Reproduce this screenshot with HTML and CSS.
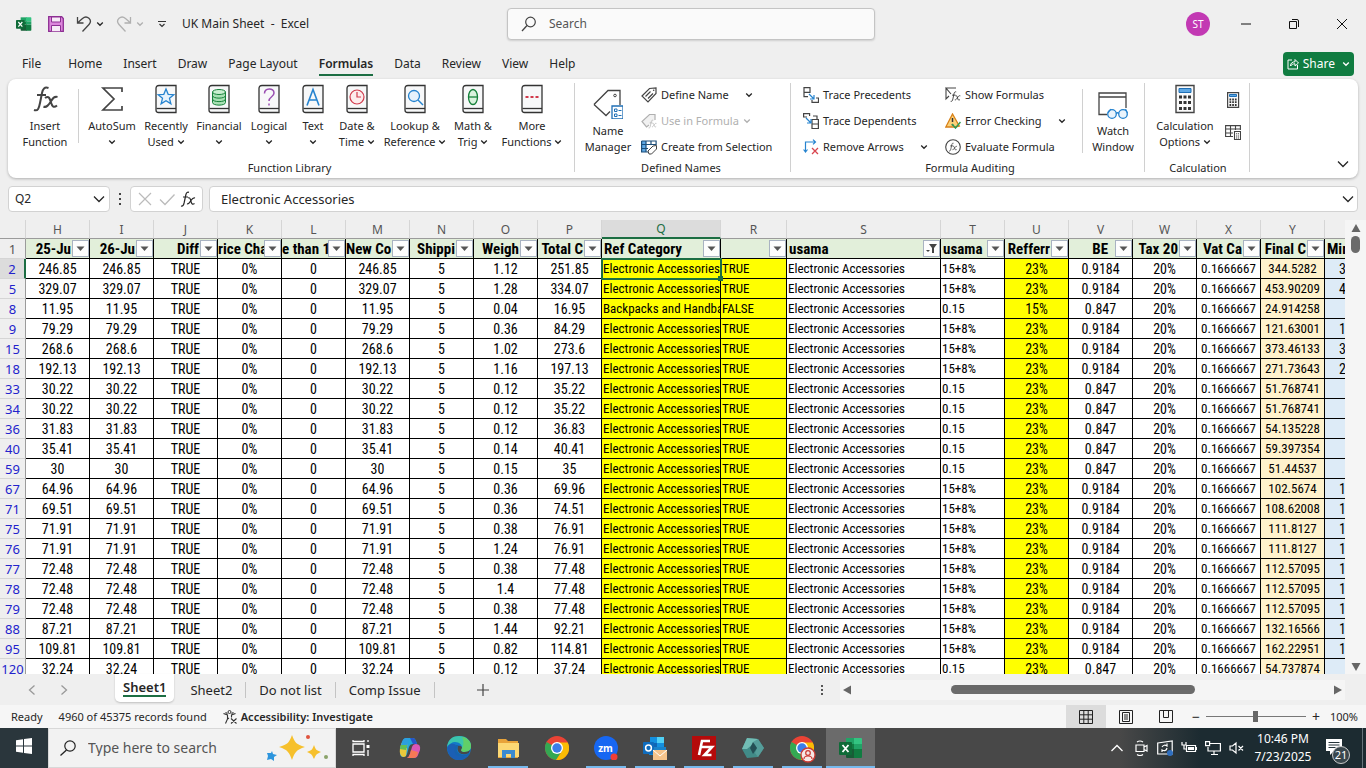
FILE: index.html
```html
<!DOCTYPE html>
<html lang="en">
<head>
<meta charset="utf-8">
<title>UK Main Sheet - Excel</title>
<link rel="stylesheet" href="styles.css">
</head>
<body>
<svg class="defs" aria-hidden="true">
  <symbol id="chev" viewBox="0 0 8 8"><path d="M1.2 2.5 4 5.3 6.800 2.500" fill="none" stroke="currentColor" stroke-width="1.3"/></symbol>
  <symbol id="chevbig" viewBox="0 0 12 12"><path d="M1 3.500 6 8.500 11 3.500" fill="none" stroke="currentColor" stroke-width="1.300"/></symbol>
  <symbol id="book" viewBox="0 0 22 30"><path d="M21 1.500H4Q1 1.500 1 4.500V26Q1 28.500 3.500 28.500H21Z" fill="#f7f8f9" stroke="#333" stroke-width="1.300"/><path d="M1.500 24.500H21" stroke="#333" stroke-width="1.300"/></symbol>
  <symbol id="fx" viewBox="0 0 16 16"><path d="M1 15c2 .5 2.600-1 3.200-3.500L5.800 4C6.300 1.800 7.200.8 9 1.300M3 6h5M8 7c2-1 2.300 1 3 3.500S12.500 14 14.500 12.500M15 7c-2-.8-3 1-4 2.500S8.500 13.500 7 12.800" fill="none" stroke="currentColor" stroke-width="1.200"/></symbol>
  <symbol id="excel" viewBox="0 0 24 24"><path d="M7 2h9v6H7z" fill="#21a366"/><path d="M15 2h7q1 0 1 1v5h-8z" fill="#33c481"/><path d="M7 8h9v5H7z" fill="#107c41"/><path d="M15 8h8v5h-8z" fill="#21a366"/><path d="M7 13h9v9H8q-1 0-1-1z" fill="#185c37"/><path d="M15 13h8v8q0 1-1 1h-7z" fill="#107c41"/><rect y="6" width="13" height="13" rx="1" fill="#0f6b38"/><path d="m3.500 9 6 7M9.500 9l-6 7" stroke="#fff" stroke-width="1.800"/></symbol>
  <symbol id="chrome" viewBox="0 0 24 24"><circle cx="12" cy="12" r="12" fill="#ea4335"/><path d="M12 12 1.600 6A12 12 0 0 0 11 24l6-9z" fill="#34a853"/><path d="M12 6.500h10.700A12 12 0 0 1 11 24l6-9z" fill="#fbbc04"/><circle cx="12" cy="12" r="6" fill="#fff"/><circle cx="12" cy="12" r="4.700" fill="#3b7de9"/></symbol>
</svg>

<header class="titlebar">
  <div class="quick">
    <svg class="i16" viewBox="0 0 24 24"><use href="#excel"/></svg>
    <button class="plain save" aria-label="Save"><svg class="i16" viewBox="0 0 16 16"><path d="M.7.700h13L15.300 2.500v12.800H.700z" fill="#dc86dc" stroke="#8d2f93" stroke-width="1.300"/><path d="M3.500 1v5h9V1zM3.500 15.300V9.500h9v5.800" fill="#f7eaf7" stroke="#8d2f93"/></svg></button>
    <button class="plain" aria-label="Undo"><svg class="i16" viewBox="0 0 16 16"><path d="M1.500 1v6h6M1.700 6.800 6.500 2.500C11-1.500 17 4 13 8.500L6.500 15.500" fill="none" stroke="#444" stroke-width="1.300"/></svg><svg class="i8"><use href="#chev"/></svg></button>
    <button class="plain faded" aria-label="Redo"><svg class="i16" viewBox="0 0 16 16"><path d="M14.500 1v6h-6M14.300 6.800 9.500 2.500C5-1.500-1 4 3 8.500l6.500 7" fill="none" stroke="currentColor" stroke-width="1.300"/></svg><svg class="i8"><use href="#chev"/></svg></button>
    <button class="plain more" aria-label="Customize Quick Access Toolbar"><svg class="i8" viewBox="0 0 8 8"><path d="M0 1.500h8M1.500 4 4 6.500 6.500 4" fill="none" stroke="#333" stroke-width="1.200"/></svg></button>
    <span class="doc">UK Main Sheet&nbsp; -&nbsp; Excel</span>
  </div>
  <label class="search"><svg class="i16" viewBox="0 0 16 16"><circle cx="9.500" cy="6" r="4.800" fill="none" stroke="#444" stroke-width="1.200"/><path d="M6 9.500 1 15" stroke="#444" stroke-width="1.300"/></svg><input type="text" placeholder="Search" aria-label="Search"></label>
  <div class="window">
    <button class="avatar">ST</button>
    <button class="plain" aria-label="Minimize"><svg class="i12" viewBox="0 0 12 12"><path d="M1 6h10" stroke="#111"/></svg></button>
    <button class="plain" aria-label="Restore"><svg class="i12" viewBox="0 0 12 12"><path d="M1.500 3.500h7v7h-7zM4 1.500h5q1.500 0 1.500 1.500v6" fill="none" stroke="#111"/></svg></button>
    <button class="plain" aria-label="Close"><svg class="i12" viewBox="0 0 12 12"><path d="m1 1 10 10M11 1 1 11" stroke="#111"/></svg></button>
  </div>
</header>

<nav class="tabs">
  <button class="file">File</button><button>Home</button><button>Insert</button><button>Draw</button><button>Page Layout</button><button class="active">Formulas</button><button>Data</button><button>Review</button><button>View</button><button>Help</button>
  <button class="share"><svg class="i12" viewBox="0 0 12 12"><path d="M5 2H1v9h9.500V7M3.500 8C3.500 5 5.500 3.800 8 3.800V1.500L11.500 5 8 8V5.800C6 5.800 4.500 6.500 3.500 8Z" fill="none" stroke="#fff"/></svg>Share<svg class="i8"><use href="#chev"/></svg></button>
</nav>

<section class="ribbon">
  <div class="group library">
    <div class="tools">
      <button class="big w66"><svg class="ico" viewBox="0 0 30 30"><path d="M4 26c4 1.500 5-2 6-7l2-10c.8-4 2.500-6.500 6.500-5M7 11h9M15 14c4-3 5 1 6 4.500s2.500 6 6 3M27.500 13c-4-1-5 2-7 5s-4 6-7 4.500" fill="none" stroke="#444" stroke-width="2"/></svg>Insert<br>Function</button>
      <i class="rule"></i>
      <button class="big w54"><svg class="ico" viewBox="0 0 30 30"><path d="M25 8V4H6l11 11L6 26h19v-4" fill="none" stroke="#444" stroke-width="1.700"/></svg>AutoSum<br><svg class="i8"><use href="#chev"/></svg></button>
      <button class="big w54"><svg class="ico" viewBox="-4 0 30 30"><use href="#book" width="22" height="30"/><path d="m11 5 2.200 5.300 5.600.4-4.300 3.600 1.400 5.500-4.900-3-4.900 3 1.400-5.500-4.300-3.600 5.600-.4z" fill="#e6f2fc" stroke="#2583cf" stroke-width="1.300"/></svg>Recently<br>Used <svg class="i8"><use href="#chev"/></svg></button>
      <button class="big w52"><svg class="ico" viewBox="-4 0 30 30"><use href="#book" width="22" height="30"/><path d="M4.500 8v10.500c0 3.500 13 3.500 13 0V8" fill="#a7e0b3" stroke="#16813a"/><path d="M4.500 11.500c0 3.500 13 3.500 13 0M4.500 15c0 3.500 13 3.500 13 0" fill="none" stroke="#16813a"/><ellipse cx="11" cy="8" rx="6.500" ry="2.500" fill="#c9efd0" stroke="#16813a"/></svg>Financial<br><svg class="i8"><use href="#chev"/></svg></button>
      <button class="big w48"><svg class="ico" viewBox="-4 0 30 30"><use href="#book" width="22" height="30"/><path d="M6.500 9.500c0-6 9.500-6 9.500-.5 0 4-5 3.500-5 8M11 19.500v2" fill="none" stroke="#9a4eb2" stroke-width="1.500"/></svg>Logical<br><svg class="i8"><use href="#chev"/></svg></button>
      <button class="big w40"><svg class="ico" viewBox="-4 0 30 30"><use href="#book" width="22" height="30"/><path d="m5 21.500 6-16 6 16M7 16h8" fill="none" stroke="#2583cf" stroke-width="1.600"/></svg>Text<br><svg class="i8"><use href="#chev"/></svg></button>
      <button class="big w48"><svg class="ico" viewBox="-4 0 30 30"><use href="#book" width="22" height="30"/><circle cx="11" cy="13" r="7" fill="#fdebec" stroke="#d13a4c" stroke-width="1.200"/><path d="M11 8v5h4" fill="none" stroke="#d13a4c" stroke-width="1.200"/></svg>Date &amp;<br>Time <svg class="i8"><use href="#chev"/></svg></button>
      <button class="big w68"><svg class="ico" viewBox="-4 0 30 30"><use href="#book" width="22" height="30"/><circle cx="10" cy="12" r="5.500" fill="#e6f2fc" stroke="#2583cf" stroke-width="1.300"/><path d="m14 16 5 5" stroke="#2583cf" stroke-width="1.400"/></svg>Lookup &amp;<br>Reference <svg class="i8"><use href="#chev"/></svg></button>
      <button class="big w48"><svg class="ico" viewBox="-4 0 30 30"><use href="#book" width="22" height="30"/><ellipse cx="11" cy="13" rx="4.500" ry="7.500" fill="#d9f2dd" stroke="#16813a" stroke-width="1.300"/><path d="M6.500 13h9" stroke="#16813a" stroke-width="1.300"/></svg>Math &amp;<br>Trig <svg class="i8"><use href="#chev"/></svg></button>
      <button class="big w70"><svg class="ico" viewBox="-4 0 30 30"><use href="#book" width="22" height="30"/><path d="M4.500 13h3M9.500 13h3M14.500 13h3" stroke="#d13a4c" stroke-width="2.200"/></svg>More<br>Functions <svg class="i8"><use href="#chev"/></svg></button>
    </div>
    <div class="caption">Function Library</div>
  </div>
  <div class="group names">
    <div class="tools">
      <button class="big w66"><svg class="ico" viewBox="0 0 30 30"><path d="m1 15.500 14-14h12V16M1 15.500l12 11 4-4" fill="none" stroke="#444" stroke-width="1.300"/><circle cx="22" cy="6.500" r="1.300" fill="none" stroke="#444"/><path d="M19 17h11v13H19z" fill="#fff" stroke="#1f6fb5" stroke-width="1.300"/><path d="M21.500 20h2.500v2.500h-2.500zM21.500 25h2.500v2.500h-2.500zM25.500 21.500h3M25.500 26.500h3" fill="none" stroke="#1f6fb5"/></svg>Name<br>Manager</button>
      <div class="stack">
        <button class="small"><svg class="i16" viewBox="0 0 16 16"><path d="M1 9 8.500 1.500 15 1v5.500L7 15zM4.500 9.500l5-5M7 11.500l5-5" fill="none" stroke="#444" stroke-width="1.200"/><circle cx="12.700" cy="3.300" r=".8" fill="#444"/></svg>Define Name<svg class="i8 end"><use href="#chev"/></svg></button>
        <button class="small faded" disabled><svg class="i16" viewBox="0 0 16 16"><path d="M8 12 5.500 14 1 8.500 8.500 1.500H14V7" fill="#f1f1f1" stroke="currentColor" stroke-width="1.200"/><use href="#fx" x="7" y="6" width="9" height="10"/></svg>Use in Formula<svg class="i8"><use href="#chev"/></svg></button>
        <button class="small"><svg class="i16" viewBox="0 0 16 16"><path d="M1 2h4v11H1z" fill="#5fa8e4"/><path d="M.6 2h14.500v4M.600 2v11H7M.600 5.500h14M5 2v11M10 2v4M.600 9.500H7" fill="none" stroke="#1d4f7a" stroke-width="1.200"/><path d="m7 12 5-5 3.500-.5V10l-5 5H8z" fill="#fff" stroke="#444"/></svg>Create from Selection</button>
      </div>
    </div>
    <div class="caption">Defined Names</div>
  </div>
  <div class="group audit">
    <div class="tools">
      <div class="stack trace">
        <button class="small"><svg class="i16" viewBox="0 0 16 16"><path d="M1 .6h6v4.800H1zM1 5.400v4.200h4M13 11h2.500v4.400H9V13" fill="none" stroke="#444" stroke-width="1.200"/><path d="m6 7 5 5M11 8v4H7" fill="none" stroke="#2583cf" stroke-width="1.200"/></svg>Trace Precedents</button>
        <button class="small"><svg class="i16" viewBox="0 0 16 16"><path d="M4 4H.600V.600h6V3M9 6.500h6.400v9H9zM9 11h6.400M10 3h4v3" fill="none" stroke="#444" stroke-width="1.200"/><path d="m3 5 5 5M8 6v4H4" fill="none" stroke="#2583cf" stroke-width="1.200"/></svg>Trace Dependents</button>
        <button class="small"><svg class="i16" viewBox="0 0 16 16"><path d="M2.500 13V3h10M10 .600 12.500 3 10 5.400M.600 10.500 2.500 13l2-2.500" fill="none" stroke="#2583cf" stroke-width="1.200"/><path d="m9 9 6 6M15 9l-6 6" stroke="#d8454f" stroke-width="1.300"/></svg>Remove Arrows<svg class="i8 end"><use href="#chev"/></svg></button>
      </div>
      <div class="stack check">
        <button class="small"><svg class="i16" viewBox="0 0 16 16"><path d="M11 1H1l5 6M1 1v11l3-3" fill="none" stroke="#444" stroke-width="1.100"/><use href="#fx" x="5" y="3" width="11" height="13"/></svg>Show Formulas</button>
        <button class="small"><svg class="i16" viewBox="0 0 16 16"><path d="M7.500 1 .800 14h9l4.500-1z" fill="#fbd27a" stroke="#d88018" stroke-width="1.300"/><path d="M7.500 5v4M7.500 11v1.500" stroke="#333" stroke-width="1.500"/><path d="m7 11 3.500 4 5-6" fill="none" stroke="#2f9a55" stroke-width="1.500"/></svg>Error Checking<svg class="i8 end"><use href="#chev"/></svg></button>
        <button class="small"><svg class="i16" viewBox="0 0 16 16"><circle cx="8" cy="8" r="7.300" fill="none" stroke="#444" stroke-width="1.100"/><use href="#fx" x="3.500" y="3" width="9" height="10"/></svg>Evaluate Formula</button>
      </div>
      <i class="rule"></i>
      <button class="big w48"><svg class="ico" viewBox="0 0 30 30"><path d="M9 25.500H1V4h27v15M1 8h27" fill="none" stroke="#444" stroke-width="1.300"/><circle cx="14" cy="25" r="4.300" fill="#eaf4fc" stroke="#2583cf" stroke-width="1.300"/><circle cx="25" cy="25" r="4.300" fill="#eaf4fc" stroke="#2583cf" stroke-width="1.300"/><path d="M18 24.500q1.500-1.500 3 0M10 24l3-4M29.500 24l-2-4" fill="none" stroke="#2583cf" stroke-width="1.200"/></svg>Watch<br>Window</button>
    </div>
    <div class="caption">Formula Auditing</div>
  </div>
  <div class="group calc">
    <div class="tools">
      <button class="big w70"><svg class="ico" viewBox="-5 0 30 30"><path d="M1 1.500h18v27H1z" fill="#fafafa" stroke="#444" stroke-width="1.400"/><path d="M4 4.500h12v4H4z" fill="#5fa8e4" stroke="#1f6fb5"/><path d="M4 13h12M4 18.500h12M4 24.500h12" stroke="#333" stroke-width="3" stroke-dasharray="3 1.500"/></svg>Calculation<br>Options <svg class="i8"><use href="#chev"/></svg></button>
      <div class="pair">
        <button class="plain" aria-label="Calculate Now"><svg class="i16" viewBox="0 0 16 16"><path d="M2.600.600h11v14.800h-11z" fill="#fafafa" stroke="#444" stroke-width="1.200"/><path d="M4.500 2.500h7v2h-7z" fill="#5fa8e4" stroke="#1f6fb5"/><path d="M4.500 7.500h8M4.500 10.200h8M4.500 13h8" stroke="#333" stroke-width="1.800" stroke-dasharray="1.700 1"/></svg></button>
        <button class="plain" aria-label="Calculate Sheet"><svg class="i16" viewBox="0 0 16 16"><path d="M8 12.500H.600V1.600h14.800V6M.600 5h14.800M.600 9H8M5.500 1.600v11M10.500 1.600V6" fill="none" stroke="#444" stroke-width="1.100"/><path d="M9.500 7.500h6v8h-6z" fill="#fff" stroke="#444" stroke-width="1.100"/><path d="M11 9.800h3M11 12h3M11 14h3" stroke="#444" stroke-dasharray="1.200 .7"/></svg></button>
      </div>
    </div>
    <div class="caption">Calculation</div>
  </div>
  <button class="plain collapse" aria-label="Collapse the Ribbon"><svg class="i12"><use href="#chevbig"/></svg></button>
</section>

<section class="formula">
  <div class="namebox"><input type="text" value="Q2" aria-label="Name Box"><button class="plain" aria-label="Names"><svg class="i12"><use href="#chevbig"/></svg></button></div>
  <svg class="dots" viewBox="0 0 4 14"><path d="M1 1h2v2H1zM1 6h2v2H1zM1 11h2v2H1z" fill="#444"/></svg>
  <div class="entry">
    <button class="plain" aria-label="Cancel"><svg class="i16" viewBox="0 0 16 16"><path d="m2 2 12 12M14 2 2 14" stroke="#bbb" stroke-width="1.200"/></svg></button>
    <button class="plain" aria-label="Enter"><svg class="i16" viewBox="0 0 16 16"><path d="m1 8.500 5 5 9.500-10" fill="none" stroke="#bbb" stroke-width="1.300"/></svg></button>
    <button class="plain" aria-label="Insert Function"><svg class="i16" viewBox="0 0 16 16"><use href="#fx"/></svg></button>
  </div>
  <div class="content"><input type="text" value="Electronic Accessories" aria-label="Formula Bar"><button class="plain" aria-label="Expand Formula Bar"><svg class="i12"><use href="#chevbig"/></svg></button></div>
</section>

<main class="sheet">
  <div class="cells">
    <table>
      <colgroup id="cols"></colgroup>
      <thead id="head"></thead>
      <tbody id="body"></tbody>
    </table>
  </div>
  <div class="vscroll">
    <svg viewBox="0 0 10 8"><path d="M5 0 9.500 8h-9z" fill="#666"/></svg>
    <i class="vthumb"></i>
    <svg class="down" viewBox="0 0 10 8"><path d="M5 8 9.500 0h-9z" fill="#666"/></svg>
  </div>
</main>

<div class="sheettabs">
  <button class="plain arrow" aria-label="Previous sheets"><svg class="i12" viewBox="0 0 12 12"><path d="M8.500 1.500 3.500 6l5 4.500" fill="none" stroke="#999" stroke-width="1.300"/></svg></button>
  <button class="plain arrow" aria-label="Next sheets"><svg class="i12" viewBox="0 0 12 12"><path d="M3.500 1.500 8.500 6l-5 4.500" fill="none" stroke="#999" stroke-width="1.300"/></svg></button>
  <button class="tab current"><span>Sheet1</span></button>
  <button class="tab">Sheet2</button>
  <button class="tab">Do not list</button>
  <button class="tab">Comp Issue</button>
  <button class="plain add" aria-label="New sheet"><svg class="i12" viewBox="0 0 12 12"><path d="M6 0v12M0 6h12" stroke="#444" stroke-width="1.200"/></svg></button>
  <svg class="dots" viewBox="0 0 4 14"><path d="M1 2h2v2H1zM1 6h2v2H1zM1 10h2v2H1z" fill="#555"/></svg>
  <div class="hscroll">
    <svg viewBox="0 0 8 10"><path d="M0 5 8 .500v9z" fill="#666"/></svg>
    <i class="hthumb"></i>
    <svg viewBox="0 0 8 10"><path d="M8 5 0 .500v9z" fill="#666"/></svg>
  </div>
</div>

<footer class="status">
  <span>Ready</span>
  <span>4960 of 45375 records found</span>
  <button class="access"><svg class="i14" viewBox="0 0 14 14"><circle cx="6.500" cy="2" r="1.500" fill="none" stroke="#333"/><path d="M.500 3.500 4.500 5v4l-2 4.500M12.500 3.500 8.500 5v2.500M4.500 9l1.500-1M2.500 2.500l2 1M10.500 2.500l-2 1M8 8.500l5.500 5M13.500 8.500 8 13.500" fill="none" stroke="#333" stroke-width="1.100"/></svg>Accessibility: Investigate</button>
  <div class="views">
    <button class="view on" aria-label="Normal"><svg class="i14" viewBox="0 0 14 14"><path d="M.5.500h13v13H.500zM.500 4.800h13M.500 9.200h13M4.800.500v13M9.200.500v13" fill="none" stroke="#222"/></svg></button>
    <button class="view" aria-label="Page Layout"><svg class="i14" viewBox="0 0 14 14"><path d="M.5.500h13v13H.500zM3.500 2.500h7v9h-7zM5 5h4M5 7h4M5 9h4" fill="none" stroke="#222"/></svg></button>
    <button class="view" aria-label="Page Break Preview"><svg class="i14" viewBox="0 0 14 14"><path d="M.5.500h13v12H.500zM4.500.500v7h5v-7" fill="none" stroke="#222"/></svg></button>
    <button class="plain step">−</button>
    <input type="range" min="0" max="100" value="49" aria-label="Zoom">
    <button class="plain step">+</button>
    <span class="percent">100%</span>
  </div>
</footer>

<footer class="taskbar">
  <button class="start" aria-label="Start"><svg class="i16" viewBox="0 0 16 16"><path d="m0 2.200 7-1v6.300H0zM8 1l8-1v7.500H8zM0 8.500h7v6.300l-7-1zM8 8.500h8V16l-8-1z" fill="#fff"/></svg></button>
  <label class="find"><svg class="i16" viewBox="0 0 16 16"><circle cx="10" cy="6" r="5.200" fill="none" stroke="#222" stroke-width="1.200"/><path d="M6.500 10 .500 15.500" stroke="#222" stroke-width="1.300"/></svg><input type="text" placeholder="Type here to search" aria-label="Type here to search">
    <svg class="stars" viewBox="0 0 64 28"><path d="M25 1c3 8 4 9 13 12-9 3-10 5-13 13-3-8-4-10-13-13 9-3 10-4 13-12z" fill="#f6c02c"/><path d="M47 11c2 5 2 5 7 7-5 2-5 3-7 7-2-4-2-5-7-7 5-2 5-2 7-7z" fill="#f6c02c"/><path d="m5 17 1 3 4 1-3 2v4l-3-2-4 1 1-4-1-3h4z" fill="#2d95dd"/><circle cx="41" cy="3" r="2" fill="#e0533e"/><circle cx="59" cy="23" r="2" fill="#8ba36a"/></svg></label>
  <button class="app" aria-label="Task View"><svg class="i18" viewBox="0 0 18 18"><path d="M1 5h11v8H1zM1 1v1.500h11V1M1 17v-1.500h11V17M16 1v2M16 11v6" fill="none" stroke="#fff" stroke-width="1.300"/><path d="M14.500 6h3v3h-3z" fill="#fff"/></svg></button>
  <button class="app" aria-label="Copilot"><svg class="i24" viewBox="0 0 24 24"><path d="M8 2h7q2 0 3 3l1 3h-4q-3 0-4 3l-2 7q-1 3-4 3-3 0-3-4l2-9q1-6 4-6z" fill="#23a6dd"/><path d="M2 12 3.500 7l6 1L8 20q-1 1-3 1-4-1-3-9z" fill="#e9c83b"/><path d="M3.500 7Q5 2 8 2h3L9 12l-7 1z" fill="#2c9fe0"/><path d="M2 13 3 9l6 0-1 5z" fill="#62be56"/><path d="M16 22H9q2-1 3-4l2-7q1-3 4-3 5 0 4 6l-2 5q-1 3-4 3z" fill="#d957b8"/><path d="M9 22q2-1 3-4l1-4 7 2-1 4q-1 2-4 2z" fill="#f57955"/><path d="M12 2h3q2 0 3 3l1 3h-4z" fill="#2656ca"/></svg></button>
  <button class="app" aria-label="Edge"><svg class="i24" viewBox="0 0 24 24"><circle cx="12" cy="12" r="12" fill="#1378c8"/><path d="M0 11C1 3 6 0 12 0c8 0 12 5 12 10 0 4-3 6-6.500 6-2.500 0-4-1-3.500-2 3-5-2-8-6-8-3 0-6 2-8 5z" fill="#3bc5ad"/><path d="M15 1c6 1 9 5 9 9 0 4-3 6-6.500 6-2.500 0-4-1-3.500-2 3-4 3-9 1-13z" fill="#61cf68"/><path d="M9 9c-3 5 0 11 6 12 3 .5 5-1 7-2-2 3-6 5-10 5C4 24 1 18 0 12c2-5 6-5 9-3z" fill="#1b5fb4"/><path d="M12 9c-3 2-3 7 1 9 3 1.500 7 1 9-1l1 1q-4 4-9 3C7 20 6 13 9 9z" fill="#1662ae"/><path d="M11 10q2-1 4 1 0 1-1 3 0 2 3.500 2 3 0 6-2-1 3-4 4-4 1-7-1-3-3-1.500-7z" fill="#484848"/></svg></button>
  <button class="app run" aria-label="File Explorer"><svg class="i24" viewBox="0 0 24 24"><path d="M2 3h8l2 2h10v17H2z" fill="#e8a33a"/><path d="M2 7h21v14H2z" fill="#fcd874"/><path d="M6 14h13v8h-4v-4h-5v4H6z" fill="#3b8ad0"/></svg></button>
  <button class="app" aria-label="Chrome"><svg class="i24"><use href="#chrome"/></svg></button>
  <button class="app run" aria-label="Zoom"><svg class="i24" viewBox="0 0 24 24"><circle cx="12" cy="12" r="12" fill="#1767f2"/><text x="11.500" y="16" text-anchor="middle" class="logo">zm</text><circle cx="20" cy="21" r="3.500" fill="#f03e36"/></svg></button>
  <button class="app run" aria-label="Outlook"><svg class="i24" viewBox="0 0 24 24"><path d="M7 1h14v11H7z" fill="#1490df"/><path d="M14 1h7v6h-7z" fill="#50d0f5"/><path d="M7 7h7v6H7z" fill="#1066b5"/><path d="M6 11h17v8H6z" fill="#1a83ca"/><rect y="6" width="11" height="12" rx="1" fill="#0f6cbd"/><circle cx="5.500" cy="12" r="2.900" fill="none" stroke="#fff" stroke-width="1.500"/><path d="M10 14h14v10H10z" fill="#f6c48b"/><path d="m10 14 7 6 7-6" fill="none" stroke="#fff"/></svg></button>
  <button class="app run" aria-label="FileZilla"><svg class="i24" viewBox="0 0 24 24"><path d="M0 0h24v24H0z" fill="#b50b0b"/><path d="M7 19 10 5h8M8.500 11h7M13 11h7l-7.500 8h7" fill="none" stroke="#fff" stroke-width="2.600"/></svg></button>
  <button class="app run" aria-label="Hex app"><svg class="i24" viewBox="0 0 24 24"><path d="m6 2 11 1 6 9-6 9-11 1-5-9z" fill="#418b88"/><path d="m6 2 11 1-5 5-6 5-5 0z" fill="#72bdb5"/><path d="m17 3 6 9-6 9-3-4 2-5-4-6z" fill="#559d9a"/><path d="m12 6 4 6-4 6-3-6z" fill="#254f55"/></svg></button>
  <button class="app run" aria-label="Chrome profile"><svg class="i24 over" viewBox="0 0 24 24"><use href="#chrome" width="24" height="24"/><circle cx="18" cy="19" r="7" fill="#f5e7e5" stroke="#cb3a32" stroke-width="1.300"/><circle cx="18" cy="17" r="2.300" fill="none" stroke="#cb3a32" stroke-width="1.200"/><path d="M14 23q0-3 4-3t4 3" fill="none" stroke="#cb3a32" stroke-width="1.200"/></svg></button>
  <button class="app run front" aria-label="Excel"><svg class="i24"><use href="#excel"/></svg></button>
  <div class="tray">
    <svg class="i16" viewBox="0 0 16 16"><path d="m2.500 11 5.500-5.500 5.500 5.500" fill="none" stroke="#fff" stroke-width="1.300"/></svg>
    <svg class="i16" viewBox="0 0 16 16"><path d="M3 5h8v6.500H3zM11 7l3-1.500V11l-3-1.500M4 2q3-2 6 0M4 14.500q3 2 6 0" fill="none" stroke="#fff" stroke-width="1.200"/></svg>
    <svg class="i16" viewBox="0 0 16 16"><path d="m.700 3 14.500-2v13H.700zM5 7q2-3 5-1V3.500M10 8q-1 4-5 2v2" fill="none" stroke="#fff" stroke-width="1.200"/><circle cx="13" cy="13" r="3" fill="#2f6fc0"/></svg>
    <svg class="i16" viewBox="0 0 16 16"><path d="M1 2v3h4V2M3 5v4h2M5.500 5.500h9v6h-9zM15.500 7v3" fill="none" stroke="#fff" stroke-width="1.200"/><path d="M7 7h6v3H7z" fill="#fff"/></svg>
    <svg class="i16" viewBox="0 0 16 16"><path d="M5 3.500h10.400v7.500H3V7M9 11v3M6 14.500h7M.600 1.600h4v4h-4z" fill="none" stroke="#fff" stroke-width="1.200"/></svg>
    <svg class="i16" viewBox="0 0 16 16"><path d="M1 6h2.500L7 3v10L3.500 10H1zM9.500 6l4.500 4.500M14 6l-4.500 4.500" fill="none" stroke="#fff" stroke-width="1.200"/></svg>
  </div>
  <div class="clock">10:46 PM<br>7/23/2025</div>
  <button class="notes" aria-label="Notifications"><svg viewBox="0 0 16 16"><path d="M0 0h16v12H8l-4 4v-4H0z" fill="#fff"/><path d="M2.500 3.500h11M2.500 6h11M2.500 8.500h7" stroke="#26343a"/></svg><span class="badge">21</span></button>
</footer>
<script src="sheet.js"></script>
</body>
</html>
```
FILE: styles.css
```css
* { box-sizing: border-box; }
body {
  margin: 0;
  height: 100vh;
  display: flex;
  flex-direction: column;
  overflow: hidden;
  background: #efefef;
  color: #262626;
  font: 12px/16px "Noto Sans", "Open Sans", sans-serif;
}
button, input { font: inherit; color: inherit; }
button { border: 0; padding: 0; background: none; white-space: nowrap; }
input { border: 0; outline: 0; background: none; min-width: 0; padding: 0; }
svg { flex: none; }
.defs { position: absolute; width: 0; height: 0; }
.plain { display: inline-flex; align-items: center; justify-content: center; }
.i8 { width: 8px; height: 8px; }
.i12 { width: 12px; height: 12px; }
.i14 { width: 14px; height: 14px; }
.i16 { width: 16px; height: 16px; }
.i18 { width: 18px; height: 18px; }
.i24 { width: 24px; height: 24px; }
.over { overflow: visible; }
.faded { color: #b0b0b0; }

.titlebar {
  flex: none;
  height: 48px;
  padding-left: 16px;
  display: grid;
  grid-template-columns: 1fr 368px 1fr;
  align-items: center;
}
.quick { display: flex; align-items: center; }
.quick .plain { gap: 4px; margin-left: 12px; }
.quick .save { margin-left: 16px; }
.quick .more { margin-left: 14px; }
.quick .doc { margin-left: 16px; }
.search {
  height: 32px;
  display: flex;
  align-items: center;
  gap: 12px;
  padding-left: 13px;
  background: #fafafa;
  border: 1px solid #c4c4c4;
  border-radius: 4px;
  box-shadow: 0 1px 2px #0002;
}
.search input { flex: 1; }
.search input::placeholder, .find input::placeholder { color: #555; opacity: 1; }
.window { display: flex; justify-content: flex-end; align-items: center; }
.window .plain { width: 48px; height: 32px; }
.avatar {
  width: 24px;
  height: 24px;
  margin-right: 12px;
  border-radius: 50%;
  background: #c239b3;
  color: #fff;
  font-size: 10px;
}

.tabs { flex: none; height: 31px; display: flex; align-items: center; gap: 21px; padding: 0 12px 0 22px; }
.tabs button { height: 24px; padding-top: 2px; border-bottom: 2px solid transparent; }
.tabs .file { margin-right: 6px; }
.tabs .active { font-weight: 600; border-color: #1c6e43; }
.tabs .share {
  margin-left: auto;
  display: flex;
  align-items: center;
  gap: 4px;
  padding: 0 4px;
  border: 0;
  border-radius: 4px;
  background: #107c41;
  color: #fff;
}
.share .i8 { margin-left: 3px; }

.ribbon {
  flex: none;
  height: 99px;
  margin: 0 8px;
  display: flex;
  background: #fff;
  border-radius: 8px;
  box-shadow: 0 1px 3px #0004;
  font-size: 11px;
}
.group { position: relative; padding: 3px 4px 2px; display: flex; flex-direction: column; justify-content: space-between; }
.group::after { content: ""; position: absolute; right: 0; top: 4px; bottom: 6px; width: 1px; background: #d0d0d0; }
.group.library { padding-right: 8px; }
.group.names { padding-left: 0; }
.group.audit { padding: 3px 8px 2px 12px; }
.group.calc { padding-left: 5px; }
.tools { display: flex; }
.rule { width: 1px; margin: 7px 6px 7px 0; background: #d0d0d0; }
.big { line-height: 16px; text-align: center; padding-top: 2px; }
.ico { display: block; width: 30px; height: 30px; margin: 0 auto 4px; }
.w40 { width: 40px; } .w48 { width: 48px; } .w52 { width: 52px; } .w54 { width: 54px; }
.w66 { width: 66px; } .w68 { width: 68px; } .w70 { width: 70px; }
.stack { display: flex; flex-direction: column; align-items: flex-start; }
.small { height: 26px; display: flex; align-items: center; gap: 4px; }
.small .end { margin-left: 12px; }
.trace { width: 142px; }
.check { width: 137px; }
.names .stack { width: 146px; }
.caption { text-align: center; }
.pair { display: flex; flex-direction: column; justify-content: center; gap: 16px; width: 26px; }
.collapse { margin: auto 9px 8px auto; }

.formula { flex: none; height: 42px; padding: 0 8px; display: flex; align-items: center; gap: 6px; }
.namebox, .entry, .content {
  height: 26px;
  display: flex;
  align-items: center;
  background: #fff;
  border: 1px solid #d2d2d2;
  border-radius: 4px;
}
.namebox { width: 102px; padding: 0 4px 0 6px; }
.namebox input { flex: 1; }
.dots { width: 4px; height: 14px; margin: 0 2px; }
.entry { width: 73px; justify-content: space-evenly; }
.content { flex: 1; padding: 0 3px 0 11px; font-size: 13px; }
.content input { flex: 1; }

.sheet { flex: 1; min-height: 0; display: flex; }
.cells { flex: 1; min-width: 0; overflow: hidden; }
table { table-layout: fixed; width: 0; border-collapse: separate; border-spacing: 0; }
th, td { height: 20px; padding: 0; overflow: hidden; white-space: nowrap; font-weight: 400; line-height: 18px; }
.letters th { height: 19px; line-height: 17px; color: #555; border-right: 1px solid #d5d5d5; border-bottom: 1px solid #9b9b9b; }
.letters .picked { background: #dcdcdc; color: #1c6e43; border-bottom: 2px solid #1c6e43; }
.rownum { background: #efefef; color: #2222cc; font-size: 13px; border-right: 1px solid #9b9b9b; border-bottom: 1px solid #d5d5d5; text-align: center; }
.rownum.first { color: #555; }
.rownum.picked { background: #dcdcdc; border-right: 2px solid #1c6e43; }
.title, td {
  color: #000;
  background: #fff;
  border-right: 1px solid #000;
  border-bottom: 1px solid #000;
  font-family: "Roboto Condensed", "Liberation Sans Narrow", "Liberation Sans", sans-serif;
  font-size: 14px;
  text-align: center;
}
.title { position: relative; background: #e2efda; font-size: 15px; font-weight: 700; text-align: right; padding-right: 18px; }
.title.left { text-align: left; padding-left: 2px; padding-right: 0; }
.title.near { padding-right: 24px; }
.filter {
  position: absolute;
  right: 0;
  bottom: 1px;
  width: 17px;
  height: 17px;
  display: flex;
  align-items: center;
  justify-content: center;
  background: #fdfdfd;
  border: 1px solid #a9b3c2;
}
.filter svg { width: 11px; height: 11px; }
.txt { text-align: left; padding-left: 1px; }
.txt, .long { font-size: 13px; }
.yellow { background: #ff0; }
.cream { background: #fff2cc; }
.blue { background: #ddebf7; text-align: left; padding-left: 14px; }
.selected { position: relative; outline: 2px solid #1c6e43; outline-offset: -1px; overflow: visible; }
.selected::after { content: ""; position: absolute; right: -3px; bottom: -3px; width: 5px; height: 5px; background: #1c6e43; }
.vscroll { width: 21px; background: #f5f5f5; display: flex; flex-direction: column; align-items: center; padding: 4px 0 3px; }
.vscroll svg { width: 10px; height: 8px; }
.vthumb { width: 9px; height: 17px; margin-top: 4px; border-radius: 5px; background: #6b6b6b; }
.down { margin-top: auto; }

.sheettabs { flex: none; height: 31px; display: flex; align-items: center; padding-right: 21px; font-size: 13px; }
.arrow { width: 32px; }
.arrow:first-child { margin-left: 16px; }
.tab { height: 16px; padding: 0 13px; border-right: 1px solid #c4c4c4; }
.tab.current { align-self: flex-start; height: 28px; margin: 0 3px 0 35px; padding: 0 8px; background: #fff; border: 0; border-radius: 0 0 5px 5px; font-weight: 600; box-shadow: 0 1px 2px #0003; }
.current span { display: inline-block; border-bottom: 2px solid #1c6e43; }
.add { margin-left: 42px; }
.sheettabs .dots { margin: 0 16px 0 auto; }
.hscroll { flex: none; width: 505px; height: 20px; display: flex; align-items: center; justify-content: space-between; padding: 0 3px; background: #f5f5f5; }
.hscroll svg { width: 8px; height: 10px; }
.hthumb { width: 244px; height: 9px; margin-right: 40px; border-radius: 5px; background: #6b6b6b; }

.status { flex: none; height: 23px; display: flex; align-items: center; gap: 16px; padding: 0 8px 0 11px; background: #f6f6f6; font-size: 11px; }
.access { display: flex; align-items: center; gap: 4px; font-weight: 600; }
.views { margin-left: auto; display: flex; align-items: center; height: 100%; }
.view { width: 40px; height: 100%; display: flex; align-items: center; justify-content: center; }
.view.on { background: #dcdcdc; }
.step { width: 20px; font-size: 14px; }
.percent { width: 32px; text-align: right; }
.views input { appearance: none; width: 100px; height: 16px; margin: 0; background: linear-gradient(#777, #777) center / 100% 1px no-repeat; }
.views input::-webkit-slider-thumb { appearance: none; width: 5px; height: 11px; background: #666; }

.taskbar { flex: none; height: 40px; display: flex; background: linear-gradient(90deg, #484848 1120px, #1c2b31 1200px); color: #fff; }
.start { width: 48px; background: #2a363c; }
.find { width: 288px; display: flex; align-items: center; gap: 12px; padding: 0 4px 0 11px; background: #f2f2f2; border: 1px solid #d8d8d8; color: #222; font-size: 14px; }
.find input { flex: 1; }
.stars { width: 64px; height: 28px; }
.app { width: 49px; display: flex; align-items: center; justify-content: center; border-bottom: 2px solid transparent; border-top: 2px solid transparent; }
.run { background: linear-gradient(#76b9ed, #76b9ed) center bottom / 40px 2px no-repeat border-box; }
.run.front { background: linear-gradient(#76b9ed, #76b9ed) center bottom / 100% 2px no-repeat border-box, #6b6b6b; }
.logo { font: 700 10px "Noto Sans", sans-serif; fill: #fff; }
.tray { margin-left: auto; display: flex; align-items: center; gap: 8px; }
.clock { width: 76px; text-align: center; line-height: 18px; padding-top: 2px; }
.notes { position: relative; width: 42px; display: flex; align-items: center; padding-left: 5px; border-right: 1px solid #66737a; margin-right: 3px; }
.notes svg { width: 16px; height: 16px; margin-bottom: 2px; }
.badge { position: absolute; left: 11px; top: 18px; width: 18px; height: 18px; border-radius: 50%; border: 1px solid #ccc; background: #3a474d; font-size: 11px; line-height: 16px; text-align: center; }
```
FILE: sheet.js
```js
const columns = [
  ["", 26], ["H", 64, "25-Ju"], ["I", 64, "26-Ju"], ["J", 64, "Diff"], ["K", 64, "rice Cha"],
  ["L", 64, "e than 1"], ["M", 64, "New Co"], ["N", 64, "Shippi"], ["O", 64, "Weigh"],
  ["P", 64, "Total C"], ["Q", 119, "Ref Category", "left"], ["R", 66, ""], ["S", 154, "usama", "left"],
  ["T", 64, "usama", "left"], ["U", 64, "Refferr"], ["V", 64, "BE", "near"], ["W", 64, "Tax 20"],
  ["X", 64, "Vat Ca"], ["Y", 64, "Final C"], ["", 64, "Min", "left"]
];

// row number, price, weight, total, final cost, first digit of the last column
const rows = `2 246.85 1.12 251.85 344.5282 3
5 329.07 1.28 334.07 453.90209 4
8 11.95 0.04 16.95 24.914258
9 79.29 0.36 84.29 121.63001 1
15 268.6 1.02 273.6 373.46133 3
18 192.13 1.16 197.13 271.73643 2
33 30.22 0.12 35.22 51.768741
34 30.22 0.12 35.22 51.768741
36 31.83 0.12 36.83 54.135228
40 35.41 0.14 40.41 59.397354
59 30 0.15 35 51.44537
67 64.96 0.36 69.96 102.5674 1
71 69.51 0.36 74.51 108.62008 1
75 71.91 0.38 76.91 111.8127 1
76 71.91 1.24 76.91 111.8127 1
77 72.48 0.38 77.48 112.57095 1
78 72.48 1.4 77.48 112.57095 1
79 72.48 0.38 77.48 112.57095 1
88 87.21 1.44 92.21 132.16566 1
95 109.81 0.82 114.81 162.22951 1
120 32.24 0.12 37.24 54.737874`.split("\n").map(line => line.split(" "));

const flatRate = new Set(["8", "33", "34", "36", "40", "59", "120"]);
const arrow = '<svg viewBox="0 0 11 11"><path d="M1.500 3.500h8l-4 4.500z" fill="#555"/></svg>';
const funnel = '<svg viewBox="0 0 11 11"><path d="M3 1h8L8 5v5H6V5zM0 7h4L2 9z" fill="#444"/></svg>';

document.getElementById("cols").innerHTML =
  columns.map(c => `<col style="width:${c[1]}px">`).join("");

const letters = columns.map(c => `<th scope="col"${c[0] === "Q" ? ' class="picked"' : ""}>${c[0]}</th>`).join("");
const titles = columns.slice(1).map(c =>
  `<th class="title ${c[3] || ""}">${c[2]}` +
  (c[2] === "Min" ? "" : `<button class="filter" aria-label="Filter ${c[0]}">${c[0] === "S" ? funnel : arrow}</button>`) +
  "</th>").join("");
document.getElementById("head").innerHTML =
  `<tr class="letters">${letters}</tr><tr><th class="rownum first">1</th>${titles}</tr>`;

document.getElementById("body").innerHTML = rows.map(([n, price, weight, total, cost, last = ""]) => {
  const flat = flatRate.has(n);
  const bag = n === "8";
  const cells = [
    [price], [price], ["TRUE"], ["0%"], ["0"], [price], ["5"], [weight], [total],
    [bag ? "Backpacks and Handbags" : "Electronic Accessories", "txt yellow" + (n === "2" ? " selected" : "")],
    [bag ? "FALSE" : "TRUE", "txt yellow"],
    ["Electronic Accessories", "txt"],
    [flat ? "0.15" : "15+8%", "txt"],
    [bag ? "15%" : "23%", "yellow"],
    [flat ? "0.847" : "0.9184"], ["20%"], ["0.1666667", "long"], [cost, "long cream"], [last, "blue"]
  ];
  return `<tr><th scope="row" class="rownum${n === "2" ? " picked" : ""}">${n}</th>` +
    cells.map(([text, kind = ""]) => `<td class="${kind}">${text}</td>`).join("") + "</tr>";
}).join("");
```
